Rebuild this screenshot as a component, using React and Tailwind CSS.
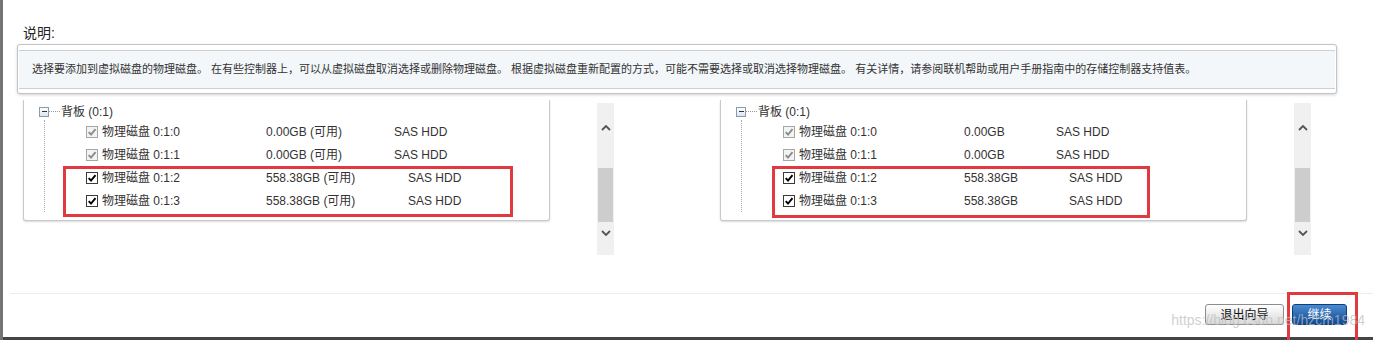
import React from 'react';

const leftRows = [
  { name: '物理磁盘 0:1:0', size: '0.00GB (可用)', off: true },
  { name: '物理磁盘 0:1:1', size: '0.00GB (可用)', off: true },
  { name: '物理磁盘 0:1:2', size: '558.38GB (可用)', off: false },
  { name: '物理磁盘 0:1:3', size: '558.38GB (可用)', off: false },
];

const rightRows = [
  { name: '物理磁盘 0:1:0', size: '0.00GB', off: true },
  { name: '物理磁盘 0:1:1', size: '0.00GB', off: true },
  { name: '物理磁盘 0:1:2', size: '558.38GB', off: false },
  { name: '物理磁盘 0:1:3', size: '558.38GB', off: false },
];

function Check({ off }) {
  return (
    <span
      className={
        off
          ? 'flex h-[12px] w-[12px] shrink-0 items-center justify-center border border-[#a6a6a6] bg-[#f3f3f3]'
          : 'flex h-[12px] w-[12px] shrink-0 items-center justify-center border border-[#3a3a3a] bg-white'
      }
    >
      <svg viewBox="0 0 12 12" className="h-[10px] w-[10px]">
        <path d="M2 6.2 L4.8 9 L10.2 2.6" fill="none" stroke={off ? '#8c8c8c' : '#000'} strokeWidth="2.3" />
      </svg>
    </span>
  );
}

// tree panel, one per side
function DiskTree({ rows, nameW, sizeW, sizeW2, redBox }) {
  return (
    <div className="relative h-[121px] w-[527px] shrink-0 rounded-b-[3px] border-x border-b border-[#c9c9c9] bg-white pt-[3px] shadow-[0_1px_2px_rgba(0,0,0,0.15)]">
      <div className="flex h-[17px] items-center pl-[15px]">
        <span className="flex h-[10px] w-[10px] items-center justify-center border border-[#8a9bb0] bg-gradient-to-b from-white to-[#dbe4ee]">
          <span className="h-px w-[5px] bg-[#333]" />
        </span>
        <span className="w-[11px] border-t border-dotted border-[#999]" />
        <span className="ml-[1px]">背板 (0:1)</span>
      </div>
      <div className="ml-[20px] border-l border-dotted border-[#aaa] pl-[41px]">
        {rows.map((r, i) => (
          <div key={r.name} className="flex h-[23px] items-center">
            <Check off={r.off} />
            <span className={nameW}>{r.name}</span>
            <span className={i < 2 ? sizeW : sizeW2}>{r.size}</span>
            <span>SAS HDD</span>
          </div>
        ))}
      </div>
      <div className={redBox} />
    </div>
  );
}

function ScrollBar() {
  return (
    <div className="ml-[47px] mt-[3px] flex h-[152px] w-[17px] shrink-0 flex-col items-center bg-[#f0f0f0]">
      <svg viewBox="0 0 10 6" className="mt-[22px] h-[6px] w-[10px]">
        <path d="M1 5 L5 1 L9 5" fill="none" stroke="#555" strokeWidth="1.8" />
      </svg>
      <div className="mt-[37px] h-[54px] w-[15px] bg-[#cdcdcd]" />
      <svg viewBox="0 0 10 6" className="mt-[8px] h-[6px] w-[10px]">
        <path d="M1 1 L5 5 L9 1" fill="none" stroke="#555" strokeWidth="1.8" />
      </svg>
    </div>
  );
}

export default function App() {
  return (
    <div className="flex h-[340px] w-[1373px] overflow-hidden bg-white font-['Liberation_Sans','Noto_Sans_CJK_SC',sans-serif] text-[12px] text-[#333]">
      <div className="w-[3px] shrink-0 bg-[#747474]" />
      <div className="flex flex-1 flex-col">
        {/* description */}
        <div className="ml-[20px] mt-[23px] h-[20px] text-[14px] leading-[20px] text-[#222]">说明:</div>
        <div className="ml-[14px] mt-px h-[50px] w-[1320px] rounded-[3px] border border-[#c4c4c4] bg-white shadow-[0_1px_3px_rgba(0,0,0,0.18)]">
          <div className="mx-[1px] mt-[5px] flex h-[39px] items-center border-y border-[#cfcfcf] bg-[#f3f7fa] pl-[13px] text-[11px] text-[#333]">
            选择要添加到虚拟磁盘的物理磁盘。 在有些控制器上，可以从虚拟磁盘取消选择或删除物理磁盘。 根据虚拟磁盘重新配置的方式，可能不需要选择或取消选择物理磁盘。 有关详情，请参阅联机帮助或用户手册指南中的存储控制器支持值表。
          </div>
        </div>

        {/* disk lists */}
        <div className="ml-[20px] mt-[6px] flex items-start">
          <DiskTree
            rows={leftRows}
            nameW="ml-[4px] w-[164px]"
            sizeW="w-[128px]"
            sizeW2="w-[142px]"
            redBox="absolute left-[39px] top-[66px] h-[51px] w-[450px] border-[3px] border-[#e03a40]"
          />
          <ScrollBar />
          <div className="ml-[106px]">
            <DiskTree
              rows={rightRows}
              nameW="ml-[4px] w-[165px]"
              sizeW="w-[92px]"
              sizeW2="w-[105px]"
              redBox="absolute left-[51px] top-[66px] h-[52px] w-[378px] border-[3px] border-[#e03a40]"
            />
          </div>
          <ScrollBar />
        </div>

        {/* footer */}
        <div className="ml-[7px] mt-[38px] h-px bg-[#ececec]" />
        <div className="relative mt-[10px] flex h-[21px] justify-end pr-[26px]">
          <button className="h-[21px] w-[79px] rounded-[3px] border border-[#8c8c8c] bg-gradient-to-b from-white to-[#d9d9d9] text-[12px] text-[#111]">
            退出向导
          </button>
          <div className="relative ml-[8px]">
            <button className="h-[21px] w-[55px] rounded-[3px] border border-[#0b3f7c] bg-gradient-to-b from-[#4a8ad0] to-[#0d4a94] text-[12px] text-white">
              继续
            </button>
            <div className="absolute -left-[5px] -top-[12px] h-[60px] w-[71px] border-[3px] border-[#e03a40]" />
          </div>
          <span className="pointer-events-none absolute right-[8px] top-[7px] text-[14px] leading-[18px] text-[#bdbdbdb8]">
            https://blog.csdn.net/hzcm1984
          </span>
        </div>
        <div className="mt-auto h-[3px] bg-[#454545]" />
      </div>
    </div>
  );
}
